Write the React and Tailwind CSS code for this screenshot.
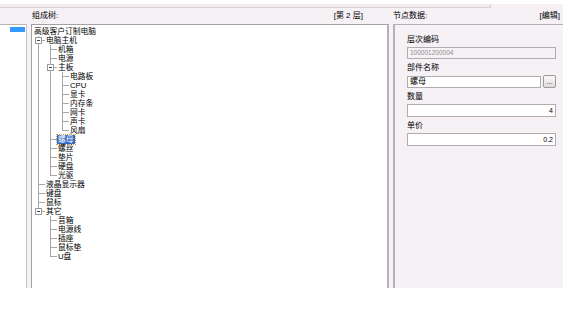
import React from "react";

const tree = {
  label: "高级客户订制电脑",
  children: [
    {
      label: "电脑主机",
      children: [
        { label: "机箱" },
        { label: "电源" },
        {
          label: "主板",
          children: [
            { label: "电路板" },
            { label: "CPU" },
            { label: "显卡" },
            { label: "内存条" },
            { label: "网卡" },
            { label: "声卡" },
            { label: "风扇" },
          ],
        },
        { label: "螺母", selected: true },
        { label: "螺丝" },
        { label: "垫片" },
        { label: "硬盘" },
        { label: "光驱" },
      ],
    },
    { label: "液晶显示器" },
    { label: "键盘" },
    { label: "鼠标" },
    {
      label: "其它",
      children: [
        { label: "音箱" },
        { label: "电源线" },
        { label: "插座" },
        { label: "鼠标垫" },
        { label: "U盘" },
      ],
    },
  ],
};

function flatten(node, depth, ancestors, isLast, out) {
  out.push({ node, depth, ancestors, isLast });
  if (node.children) {
    node.children.forEach((c, i) => {
      const last = i === node.children.length - 1;
      flatten(c, depth + 1, depth >= 1 ? [...ancestors, !isLast] : ancestors, last, out);
    });
  }
  return out;
}

const rows = flatten(tree, 0, [], true, []);

function Cell({ kind, box }) {
  return (
    <div className="relative w-[12px] h-[9px] shrink-0">
      {kind === "pipe" && <div className="absolute left-[5px] top-0 h-[9px] w-px bg-[#a8a8a8]" />}
      {(kind === "tee" || kind === "elbow") && (
        <>
          <div
            className={
              kind === "tee"
                ? "absolute left-[5px] top-0 h-[9px] w-px bg-[#a8a8a8]"
                : "absolute left-[5px] top-0 h-[5px] w-px bg-[#a8a8a8]"
            }
          />
          <div className="absolute left-[5px] top-[4px] h-px w-[7px] bg-[#a8a8a8]" />
        </>
      )}
      {box && (
        <div className="absolute left-[2px] top-[1px] w-[7px] h-[7px] border border-[#9a9a9a] bg-white flex items-center justify-center">
          <div className="w-[3px] h-px bg-[#444]" />
        </div>
      )}
    </div>
  );
}

function TreeRow({ row }) {
  const { node, depth, ancestors, isLast } = row;
  return (
    <div className="flex h-[9px] items-center">
      {ancestors.map((has, i) => (
        <Cell key={i} kind={has ? "pipe" : "none"} />
      ))}
      {depth >= 1 && <Cell kind={isLast ? "elbow" : "tee"} box={!!node.children} />}
      <span
        className={
          node.selected
            ? "inline-block px-px h-[9px] leading-[9px] overflow-hidden bg-[#316ac5] text-white outline outline-1 outline-dotted outline-[#c9a24a] whitespace-nowrap"
            : "inline-block px-px h-[9px] leading-[9px] overflow-hidden text-black whitespace-nowrap"
        }
      >
        {node.label}
      </span>
    </div>
  );
}

function Field({ label, children }) {
  return (
    <div className="flex flex-col">
      <div className="h-[10px] leading-[10px] text-[8px] text-black">{label}</div>
      <div className="mt-[2px]">{children}</div>
    </div>
  );
}

export default function App() {
  return (
    <div
      className="w-[583px] h-[313px] bg-white overflow-hidden"
      style={{ fontFamily: '"Liberation Sans", "Noto Sans CJK SC", sans-serif' }}
    >
      <div className="mt-[4px] w-[563px] h-[284px] bg-[#f5f1f5] flex flex-col">
        <div className="h-[4px] w-[491px] bg-[#efebef] border-b border-r border-[#d6d2d6]" />
        <div className="flex flex-1">
          {/* left list */}
          <div className="w-[27px] flex flex-col">
            <div className="h-[16px]" />
            <div className="flex-1 bg-white border-t border-[#b8b4b8] border-r border-r-[#c8c4c8] pt-[2px]">
              <div className="ml-[10px] w-[15px] h-[5px] bg-[#3399ff]" />
            </div>
          </div>
          {/* tree */}
          <div className="ml-[4px] w-[358px] flex flex-col">
            <div className="h-[16px] flex items-center justify-between pl-[1px] pr-[26px] text-[8px] text-black">
              <span>组成树:</span>
              <span>[第 2 层]</span>
            </div>
            <div className="flex-1 bg-white border-l border-t border-[#a4a0a4] border-r-2 border-r-[#b4b0b4] pl-[1px] pt-[2px] text-[7.75px]">
              {rows.map((r, i) => (
                <TreeRow key={i} row={r} />
              ))}
            </div>
          </div>
          {/* right */}
          <div className="ml-[4px] flex-1 flex flex-col">
            <div className="h-[16px] flex items-center justify-between pr-[3px] text-[8px] text-black">
              <span>节点数据:</span>
              <span>[编辑]</span>
            </div>
            <div className="flex-1 border-l-2 border-t border-[#b4b0b4] pt-[10px] pl-[12px] pr-[7px] flex flex-col gap-[4px]">
              <Field label="层次编码">
                <div className="h-[12px] border border-[#b0acb0] bg-[#f5f1f5] text-[6.5px] leading-[10px] text-[#8c8c8c] px-[2px]">
                  100001200004
                </div>
              </Field>
              <Field label="部件名称">
                <div className="flex items-center gap-[2px]">
                  <div className="flex-1 h-[12px] border border-[#b0acb0] bg-white text-[8px] leading-[10px] text-black px-[2px]">
                    螺母
                  </div>
                  <div className="w-[13px] h-[13px] rounded-[2px] border border-[#9c989c] bg-gradient-to-b from-[#fafafa] to-[#dcdcdc] text-[7px] leading-[9px] text-[#333] flex items-center justify-center">
                    ...
                  </div>
                </div>
              </Field>
              <Field label="数量">
                <div className="h-[13px] border border-[#b0acb0] bg-white text-[7px] leading-[11px] text-black px-[2px] text-right">
                  4
                </div>
              </Field>
              <Field label="单价">
                <div className="h-[13px] border border-[#b0acb0] bg-white text-[7px] leading-[11px] text-black px-[2px] text-right">
                  0.2
                </div>
              </Field>
            </div>
          </div>
        </div>
      </div>
    </div>
  );
}
